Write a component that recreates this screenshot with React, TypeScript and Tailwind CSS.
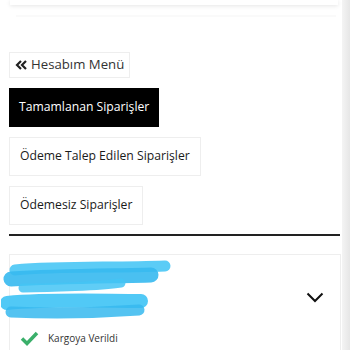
import React from 'react'

const font = { fontFamily: '"Open Sans", "DejaVu Sans", sans-serif' }

const TabButton: React.FC<{ label: string; active?: boolean }> = ({ label, active }) => (
  <button
    type="button"
    className={`h-[39px] px-[10px] text-left text-[12.2px] ${
      active ? 'bg-black text-white' : 'border border-[#eeeeee] bg-white text-[#1a1a1a]'
    }`}
  >
    {label}
  </button>
)

export default function App() {
  return (
    <div className="flex h-[350px] w-[350px] overflow-hidden bg-white" style={font}>
      <div className="flex w-[342px] flex-col pl-[9px] pr-[1px]">
        {/* üst kart */}
        <div className="mx-[1px] h-[5px] w-[328px] bg-white shadow-[0_1px_4px_rgba(0,0,0,0.10)]" />
        <div className="ml-[7px] mt-[10px] h-[2px] w-[320px] bg-[#fafafa]" />

        <div className="mt-[35px] flex flex-col items-start gap-[10px]">
          <button
            type="button"
            className="flex h-[26px] items-center gap-[4px] border border-[#eeeeee] px-[5px] text-[13.2px] text-[#333]"
          >
            <svg width="12" height="10" viewBox="0 0 12 10" fill="none" stroke="#222" strokeWidth="2.2">
              <path d="M6 1 L2 5 L6 9" />
              <path d="M11 1 L7 5 L11 9" />
            </svg>
            Hesabım Menü
          </button>
          <TabButton label="Tamamlanan Siparişler" active />
          <TabButton label="Ödeme Talep Edilen Siparişler" />
          <TabButton label="Ödemesiz Siparişler" />
        </div>

        <div className="mt-[9px] h-[2px] w-[331px] bg-[#222]" />

        <div className="relative mt-[18px] flex w-[332px] flex-1 flex-col border border-b-0 border-[#eeeeee]">
          <svg className="absolute -left-[9px] top-[5px]" width="180" height="66" viewBox="0 0 180 66" fill="none" strokeLinecap="round">
            <path d="M14 10 C60 6, 110 8, 164 6" stroke="#3ec3f5" strokeWidth="11" opacity="0.85" />
            <path d="M10 19 C60 16, 120 16, 150 15" stroke="#36b9ef" strokeWidth="15" opacity="0.9" />
            <path d="M22 28 C50 28, 100 26, 120 23" stroke="#44c4f4" strokeWidth="9" opacity="0.85" />
            <path d="M6 43 C50 39, 100 41, 140 41" stroke="#3ec3f5" strokeWidth="14" opacity="0.9" />
            <path d="M10 52 C60 54, 110 52, 138 50" stroke="#36b9ef" strokeWidth="11" opacity="0.85" />
          </svg>
          <div className="flex h-[70px] items-end justify-end pr-[16px]">
            <svg width="18" height="11" viewBox="0 0 18 11" fill="none" stroke="#111" strokeWidth="2" className="mb-[22px]">
              <path d="M1.5 1.5 L9 9 L16.5 1.5" />
            </svg>
          </div>
          <div className="mt-[6px] flex items-center gap-[9px] pl-[10px]">
            <svg width="19" height="15" viewBox="0 0 19 15" fill="none" stroke="#3aaf6a" strokeWidth="3.5">
              <path d="M2 7.5 L7 12.5 L17 2" />
            </svg>
            <span className="text-[10px] text-[#333]">Kargoya Verildi</span>
          </div>
        </div>
      </div>
      <div className="h-full w-[8px] bg-gradient-to-r from-[#f4f4f4] to-[#e6e6e6]" />
    </div>
  )
}
